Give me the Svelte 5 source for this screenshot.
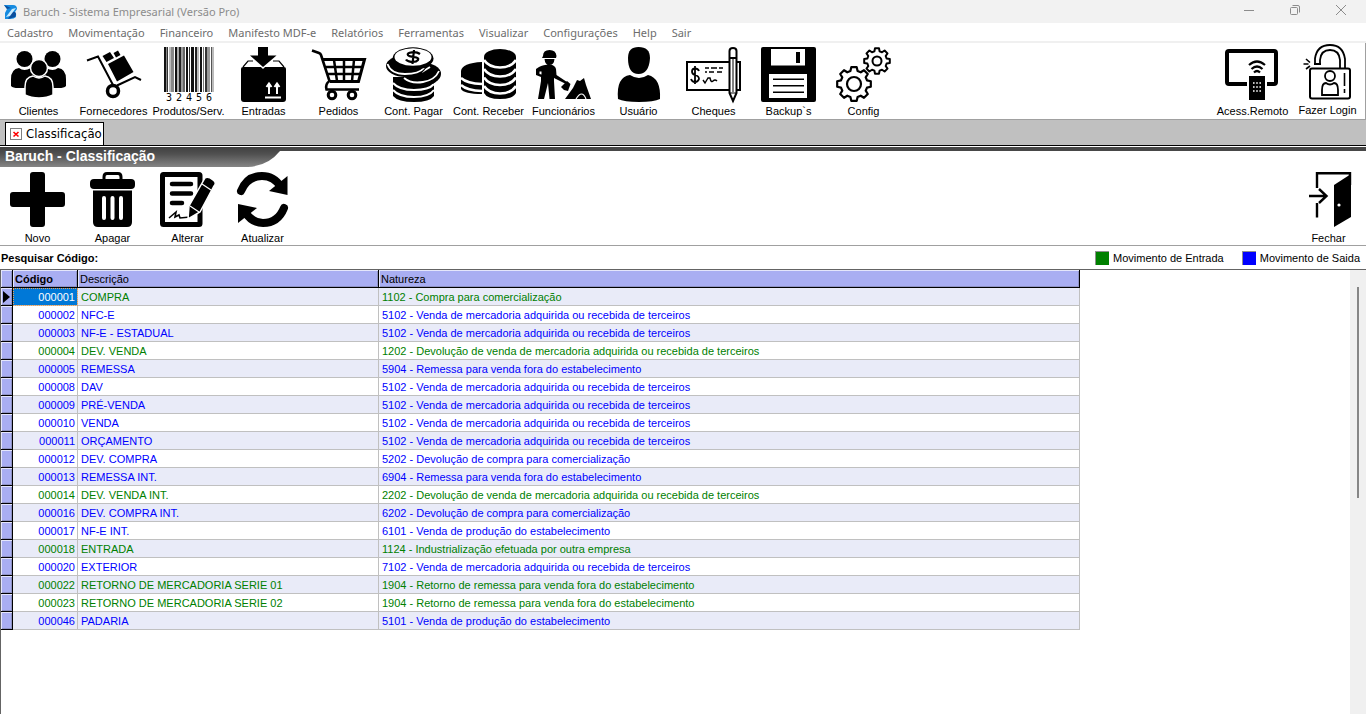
<script>
  const menus = ['Cadastro', 'Movimentação', 'Financeiro', 'Manifesto MDF-e', 'Relatórios', 'Ferramentas', 'Visualizar', 'Configurações', 'Help', 'Sair'];

  const mainTools = [
    ['clientes', 'Clientes'],
    ['fornecedores', 'Fornecedores'],
    ['produtos', 'Produtos/Serv.'],
    ['entradas', 'Entradas'],
    ['pedidos', 'Pedidos'],
    ['pagar', 'Cont. Pagar'],
    ['receber', 'Cont. Receber'],
    ['funcionarios', 'Funcionários'],
    ['usuario', 'Usuário'],
    ['cheques', 'Cheques'],
    ['backup', 'Backup`s'],
    ['config', 'Config']
  ];
  const sideTools = [
    ['remoto', 'Acess.Remoto'],
    ['login', 'Fazer Login']
  ];
  const formTools = [
    ['novo', 'Novo'],
    ['apagar', 'Apagar'],
    ['alterar', 'Alterar'],
    ['atualizar', 'Atualizar']
  ];

  const venda = '5102 - Venda de mercadoria adquirida ou recebida de terceiros';
  // [code, description, nature, incoming movement]
  const rows = [
    ['000001', 'COMPRA', '1102 - Compra para comercialização', true],
    ['000002', 'NFC-E', venda, false],
    ['000003', 'NF-E - ESTADUAL', venda, false],
    ['000004', 'DEV. VENDA', '1202 - Devolução de venda de mercadoria adquirida ou recebida de terceiros', true],
    ['000005', 'REMESSA', '5904 - Remessa para venda fora do estabelecimento', false],
    ['000008', 'DAV', venda, false],
    ['000009', 'PRÉ-VENDA', venda, false],
    ['000010', 'VENDA', venda, false],
    ['000011', 'ORÇAMENTO', venda, false],
    ['000012', 'DEV. COMPRA', '5202 - Devolução de compra para comercialização', false],
    ['000013', 'REMESSA INT.', '6904 - Remessa para venda fora do estabelecimento', false],
    ['000014', 'DEV. VENDA INT.', '2202 - Devolução de venda de mercadoria adquirida ou recebida de terceiros', true],
    ['000016', 'DEV. COMPRA INT.', '6202 - Devolução de compra para comercialização', false],
    ['000017', 'NF-E INT.', '6101 - Venda de produção do estabelecimento', false],
    ['000018', 'ENTRADA', '1124 - Industrialização efetuada por outra empresa', true],
    ['000020', 'EXTERIOR', '7102 - Venda de mercadoria adquirida ou recebida de terceiros', false],
    ['000022', 'RETORNO DE MERCADORIA SERIE 01', '1904 - Retorno de remessa para venda fora do estabelecimento', true],
    ['000023', 'RETORNO DE MERCADORIA SERIE 02', '1904 - Retorno de remessa para venda fora do estabelecimento', true],
    ['000046', 'PADARIA', '5101 - Venda de produção do estabelecimento', false]
  ];
  let selected = $state('000001');
  let busca = $state('');

  // [x, width, shade] of each barcode stripe
  const bars = [
    [3, 2, '#111'], [5, 1, '#888'], [6, 1, '#333'], [8, 2, '#bbb'], [10, 3, '#888'], [14, 2, '#111'], [16, 2, '#aaa'],
    [18, 2, '#222'], [20, 2, '#999'], [22, 2, '#666'], [25, 2, '#111'], [28, 1, '#333'], [30, 3, '#111'],
    [34, 2, '#222'], [36, 2, '#bbb'], [39, 2, '#111'], [42, 1, '#777'], [44, 2, '#333'], [46, 3, '#999'],
    [50, 1, '#555'], [51, 2, '#bbb']
  ];

  function gear(cx, cy, outer, inner, teeth) {
    const points = [];
    const step = (Math.PI * 2) / teeth;
    for (let i = 0; i < teeth; i++) {
      const a = i * step - Math.PI / 2;
      for (const [offset, r] of [[-0.34, inner], [-0.2, outer], [0.2, outer], [0.34, inner]]) {
        const t = a + offset * step;
        points.push(`${(cx + r * Math.cos(t)).toFixed(1)},${(cy + r * Math.sin(t)).toFixed(1)}`);
      }
    }
    return points.join(' ');
  }
</script>

{#snippet icon(name)}
  <svg class="icon" viewBox="0 0 55 55" aria-hidden="true">
    {#if name === 'clientes'}
      <circle cx="13.5" cy="12" r="8" />
      <circle cx="41.5" cy="12" r="8" />
      <path d="M0 39V32Q0 22 8 21Q13 25 20 21Q25 22 26 41H7Q2 41 0 39Z" />
      <path d="M55 39V32Q55 22 47 21Q42 25 35 21Q30 22 29 41H48Q53 41 55 39Z" />
      <path d="M14 48V40Q14 30 22 29Q28 33 34 29Q42 30 42 40V48Q36 51 28 51T14 48Z" stroke="#fff" stroke-width="1.5" />
      <circle cx="28" cy="21" r="8.5" stroke="#fff" stroke-width="1.5" />
    {:else if name === 'fornecedores'}
      <path d="M1 13.500L12 9.500L27 38M31 38.500L49 30L55 33" fill="none" stroke="#000" stroke-width="2" />
      <circle cx="27" cy="44" r="5.500" fill="none" stroke="#000" stroke-width="3.500" />
      <path d="M22 17L38 8.500L47.500 25L31 34.500ZM16.500 9L24 5L28 11L20.500 15ZM27.500 6L32 3.500L34.500 8L30 10.500Z" />
    {:else if name === 'produtos'}
      {#each bars as [x, w, shade]}
        <rect {x} y="0" width={w} height="45" fill={shade} />
      {/each}
      {#each ['3', '2', '4', '5', '6'] as digit, i}
        <text x={8 + i * 10} y="54" text-anchor="middle" class="digit">{digit}</text>
      {/each}
    {:else if name === 'entradas'}
      <path d="M7 20L12 14H17M37 14H43L48 20" fill="none" stroke="#000" stroke-width="1.200" />
      <path d="M5 22Q5 20 7 20H48Q50 20 50 22V52Q50 55 47 55H8Q5 55 5 52Z" />
      <path d="M14 8.500L27 21L40 8.500" fill="none" stroke="#fff" stroke-width="1.500" />
      <path d="M22 0H32V8.500H40.500L27 20L14 8.500H22Z" />
      <path d="M33 47V37M30.500 40L33 36.500L35.500 40M41 47V37M38.500 40L41 36.500L43.500 40M29 50.500H45" fill="none" stroke="#fff" stroke-width="2" />
    {:else if name === 'pedidos'}
      <path d="M1 3.500L8 6Q9.500 6.500 10 8L18.500 34Q14 37 15.500 42.500H48" fill="none" stroke="#000" stroke-width="2.600" />
      <path d="M12 12.500H53.500L47.500 34.500H19" fill="none" stroke="#000" stroke-width="3" />
      <path d="M15 20H51M17 27H49M23 13L26 34M33 13V34M43 13L41 34" fill="none" stroke="#000" stroke-width="2.500" />
      <circle cx="21" cy="48" r="3.800" fill="#fff" stroke="#000" stroke-width="3" />
      <circle cx="41" cy="48" r="3.800" fill="#fff" stroke="#000" stroke-width="3" />
    {:else if name === 'pagar'}
      <path d="M7 30V49Q12 55 28 55T48 49V30Z" />
      <path d="M7 36Q13 43 28 43T48 37M7 43Q13 50 28 50T48 43" fill="none" stroke="#fff" stroke-width="2" />
      <ellipse cx="36" cy="27" rx="19" ry="11.500" />
      <path d="M18 31Q25 37 37 35T53 24" fill="none" stroke="#fff" stroke-width="1.800" />
      <path d="M36 25L44 20" stroke="#fff" stroke-width="1.800" />
      <ellipse cx="20" cy="19" rx="20" ry="11" />
      <path d="M1.500 17Q5 27 19 27T38 21" fill="none" stroke="#fff" stroke-width="1.800" />
      <ellipse cx="27" cy="11.500" rx="20.500" ry="11.200" />
      <ellipse cx="27" cy="10" rx="18.500" ry="8.800" fill="#fff" />
      <path d="M34 7Q31 4.800 26 5.300Q20.500 6 22 8.200Q23 9.600 28 10Q33.500 10.800 32 13Q30 15.500 25 14.800Q21 14.200 20 12.500M28 3L26.500 17" fill="none" stroke="#000" stroke-width="2.200" />
    {:else if name === 'receber'}
      <path d="M21 15Q1 16 0 24V42Q3 47 21 47Z" />
      <path d="M0 31Q6 36.500 21 37M0 38Q6 43.500 21 44" fill="none" stroke="#fff" stroke-width="2.400" />
      <path d="M23 10V46Q26 52 39 52T55 46V10Z" />
      <ellipse cx="39" cy="10" rx="16" ry="8" />
      <path d="M23 13Q28 20.500 39 20.500T55 13M23 22Q28 29.500 39 29.500T55 22M23 30.500Q28 38 39 38T55 30.500M23 39Q28 46.500 39 46.500T55 39" fill="none" stroke="#fff" stroke-width="2.600" />
    {:else if name === 'funcionarios'}
      <path d="M7 9Q7 3 13.500 3Q20 3 20.500 9L20 11H6Z" />
      <path d="M8.500 12H18.500Q18 18 13.500 18T8.500 12ZM3 20Q7 17.500 14 17.500Q19 18 20 22L20.500 28L31 35L30 37L18 31V34L19 52H13.500L12 36L8 52H2L5 34V30L0 28V22Z" />
      <path d="M3.500 24.500V27L5.500 27.500V24.500Z" fill="#fff" />
      <path d="M25 40L31 34L34.500 37L32 44L28 43Z" />
      <path d="M29 52L37 41L41 33L44 34L48 31L50 38L55 52Z" />
      <path d="M40 52Q46 42 50 52" fill="none" stroke="#fff" stroke-width="1.200" />
    {:else if name === 'usuario'}
      <path d="M27.500 0Q39 0 39 11Q38 27 27.500 27T17 11Q17 0 27.500 0Z" />
      <path d="M7 52Q5 30 19 28Q28 34 37 28Q50 31 49 52Q43 55 28 55T7 52Z" />
    {:else if name === 'cheques'}
      <rect x="1" y="15" width="53" height="28" fill="#fff" stroke="#000" stroke-width="2" />
      <path d="M13 24Q12 21.500 9 21.500Q6 21.500 6 24.500Q6 27 9 28Q13 29 13 32Q12 35 9 35Q6 35 5 32M9 19V37" fill="none" stroke="#000" stroke-width="1.800" />
      <path d="M19 21H23M25 21H31M33 21H37M19 25H21M23 25H28M31 25H36" stroke="#000" stroke-width="1.600" />
      <path d="M17 33L19 36L22 31H24Q25 36 27 34T31 34" fill="none" stroke="#000" stroke-width="1.400" />
      <path d="M43.500 4Q43.500 1 47 1T50.500 4V46L47 54L43.500 46Z" fill="#fff" stroke="#000" stroke-width="2" />
      <path d="M43 46H51M47 12V45" stroke="#000" stroke-width="1" />
      <path d="M45.500 51H48.500L47 55ZM43 10H51V12H43Z" />
    {:else if name === 'backup'}
      <rect width="55" height="55" rx="2" />
      <path d="M10 2H44V18.500H10ZM8 27H46V51H8Z" fill="#fff" />
      <path d="M35 5H39V16H35ZM12 31.500H43V33H12ZM12 38H43V39.500H12ZM12 44.500H43V46H12Z" />
    {:else if name === 'config'}
      <polygon points={gear(18, 37, 17, 13.5, 8)} fill="none" stroke="#000" stroke-width="2.200" stroke-linejoin="round" />
      <circle cx="18" cy="37" r="7" fill="none" stroke="#000" stroke-width="2.200" />
      <polygon points={gear(41, 14, 13, 10, 8)} fill="none" stroke="#000" stroke-width="2" stroke-linejoin="round" />
      <circle cx="41" cy="14" r="4.500" fill="none" stroke="#000" stroke-width="2" />
    {:else if name === 'remoto'}
      <rect x="2" y="4" width="49" height="33" rx="2" fill="none" stroke="#000" stroke-width="4" />
      <path d="M22 27H42V55H22Z" fill="#fff" />
      <rect x="24" y="29" width="16" height="24" />
      <path d="M28 36H36M28 40H36M28 44H36" stroke="#fff" stroke-width="1.600" stroke-dasharray="1.600 1.600" />
      <path d="M24 18Q32 11 40 18M26.500 22Q32 17 37.500 22M29 25.500Q32 22.500 35 25.500" fill="none" stroke="#000" stroke-width="2.200" />
    {:else if name === 'login'}
      <rect x="10" y="24.500" width="40" height="30" rx="2" fill="none" stroke="#000" stroke-width="2" />
      <path d="M15 20V14.500Q17 1 30 1T45 15V24M20 20V16Q21 6 30 6T40 16V24M14 20H21" fill="none" stroke="#000" stroke-width="1.800" />
      <circle cx="30" cy="32" r="5" fill="none" stroke="#000" stroke-width="1.800" />
      <path d="M22 51V46Q22 39 26 39Q30 42 34 39Q38 39 38 46V51Z" fill="none" stroke="#000" stroke-width="1.800" />
      <path d="M44.500 29V42M44.500 45V49M6 15L10 18.500M3.500 20H8.500M6 25L10 22" stroke="#000" stroke-width="1.600" />
    {:else if name === 'novo'}
      <path d="M23 0H32Q35 0 35 3V20H52Q55 20 55 23V32Q55 35 52 35H35V52Q35 55 32 55H23Q20 55 20 52V35H3Q0 35 0 32V23Q0 20 3 20H20V3Q20 0 23 0Z" />
    {:else if name === 'apagar'}
      <path d="M19 8V5Q19 1.500 22 1.500H33Q36 1.500 36 5V8" fill="none" stroke="#000" stroke-width="3" />
      <rect x="5" y="7" width="45" height="10" rx="4" />
      <path d="M8 18.500H47V50Q47 55 42 55H13Q8 55 8 50Z" />
      <path d="M19 26V46M27.500 26V46M36 26V46" stroke="#fff" stroke-width="4" stroke-linecap="round" />
    {:else if name === 'alterar'}
      <rect x="2.500" y="2.500" width="37.500" height="50" rx="1" fill="#fff" stroke="#000" stroke-width="5" />
      <path d="M12 12H31M12 21.500H31M12 31H22" stroke="#000" stroke-width="4.500" stroke-linecap="round" />
      <path d="M9 46L16 40L15 45L19 43L20 46L30 45" fill="none" stroke="#000" stroke-width="1.600" />
      <path d="M45 6Q48 4 53 8Q57 11 54 14L40 40L28 47L29 34Z" stroke="#fff" stroke-width="1.500" />
      <path d="M42 12L51 18M30 34L39 40" stroke="#fff" stroke-width="1.200" />
    {:else if name === 'atualizar'}
      <path d="M6 19Q12 4 27 4Q39 4 46 15" fill="none" stroke="#000" stroke-width="8" stroke-linecap="round" />
      <path d="M52.500 4V23L34 19Z" />
      <path d="M49 36Q43 51 28 51Q17 51 10 40" fill="none" stroke="#000" stroke-width="8" stroke-linecap="round" />
      <path d="M3 51V32L22 36Z" />
    {:else if name === 'fechar'}
      <path d="M16 16V1.200H49V13M16 31V45.500" fill="none" stroke="#000" stroke-width="2.400" />
      <path d="M33 13L50 2V45L33 55Z" />
      <path d="M8 24H25M18 17L25.500 24L18 31" fill="none" stroke="#000" stroke-width="2.400" />
      <circle cx="38" cy="33" r="1.600" fill="#fff" />
    {/if}
  </svg>
{/snippet}

{#snippet tool([name, label])}
  <button class="tool" type="button">
    {@render icon(name)}
    <span>{label}</span>
  </button>
{/snippet}

<div class="window">
  <header class="titlebar">
    <svg class="logo" viewBox="0 0 16 16" aria-hidden="true">
      <path d="M1 1H10Q14 1 14 5L12 8Q14 10 13 13Q11 15 7 15H2V9L4 5Z" fill="#168be0" />
      <path d="M1 1L8 4L4 5ZM9 8L12 8Q14 10 12 13L5 15Z" fill="#0b4e9c" />
      <path d="M3 13L9 5L13 4L7 12Z" fill="#c9ecff" />
    </svg>
    <span class="caption">Baruch - Sistema Empresarial (Versão Pro)</span>
    <div class="controls">
      <button type="button" aria-label="Minimizar"><svg viewBox="0 0 12 12"><path d="M1 6.500H11" /></svg></button>
      <button type="button" aria-label="Restaurar"><svg viewBox="0 0 12 12"><rect x="1.500" y="3.500" width="7" height="7" rx="1" /><path d="M3.500 1.500H9Q10.500 1.500 10.500 3V8.500" /></svg></button>
      <button type="button" aria-label="Fechar janela"><svg viewBox="0 0 12 12"><path d="M1 1L11 11M11 1L1 11" /></svg></button>
    </div>
  </header>

  <nav class="menu">
    {#each menus as item}
      <button type="button">{item}</button>
    {/each}
  </nav>

  <div class="toolbar main">
    <div class="group">
      {#each mainTools as item}{@render tool(item)}{/each}
    </div>
    <div class="group side">
      {#each sideTools as item}{@render tool(item)}{/each}
    </div>
  </div>

  <div class="tabs">
    <div class="tab">
      <button type="button" aria-label="Fechar aba">
        <svg viewBox="0 0 10 10"><path d="M2.500 3L7.500 7.500M7.500 3L2.500 7.500" stroke="#f00" stroke-width="1.600" /></svg>
      </button>
      <span>Classificação</span>
    </div>
  </div>

  <div class="banner">
    <svg viewBox="0 0 280 20" aria-hidden="true">
      <defs>
        <linearGradient id="steel" x1="0" y1="0" x2="0" y2="1">
          <stop offset="0" stop-color="#404040" />
          <stop offset="0.350" stop-color="#505050" />
          <stop offset="1" stop-color="#858585" />
        </linearGradient>
      </defs>
      <path d="M0 0H280V4Q268 19 248 20H0Z" fill="url(#steel)" />
    </svg>
    <h1>Baruch - Classificação</h1>
  </div>

  <div class="toolbar form">
    <div class="group">
      {#each formTools as item}{@render tool(item)}{/each}
    </div>
    <div class="group">{@render tool(['fechar', 'Fechar'])}</div>
  </div>

  <div class="search">
    <label for="busca">Pesquisar Código:</label>
    <input id="busca" type="text" bind:value={busca} />
    <span class="legend"><i class="entrada"></i>Movimento de Entrada</span>
    <span class="legend"><i class="saida"></i>Movimento de Saida</span>
  </div>

  <main class="grid">
    <div class="sheet">
      <table>
        <colgroup><col class="c-mark" /><col class="c-code" /><col class="c-desc" /><col class="c-nat" /></colgroup>
        <thead>
          <tr><th></th><th class="sorted">Código</th><th>Descrição</th><th>Natureza</th></tr>
        </thead>
        <tbody>
          {#each rows as [code, desc, nature, incoming]}
            <tr class:incoming class:selected={selected === code} onclick={() => (selected = code)}>
              <th scope="row">{#if selected === code}<svg viewBox="0 0 7 12"><path d="M0 0L7 6L0 12Z" /></svg>{/if}</th>
              <td class="code">{code}</td>
              <td>{desc}</td>
              <td>{nature}</td>
            </tr>
          {/each}
        </tbody>
      </table>
    </div>
    <div class="scroll"><div class="thumb"></div></div>
  </main>
</div>

<style>
  :global(body) { margin: 0; background: #fff; }
  .window {
    display: flex;
    flex-direction: column;
    min-height: 100vh;
    background: #fff;
    color: #000;
    font: 11px/14px "Liberation Sans", Arial, sans-serif;
  }
  button {
    margin: 0;
    padding: 0;
    border: 0;
    background: none;
    color: inherit;
    font: inherit;
  }
  svg { display: block; }

  .titlebar {
    display: flex;
    align-items: center;
    height: 23px;
    padding: 0 2px 0 3px;
    background: #f2f2f2;
    color: #8c8c8c;
    font: 11px/16px "Noto Sans", "Open Sans", sans-serif;
  }
  .logo { width: 16px; height: 16px; }
  .caption { flex: 1; margin-left: 4px; }
  .controls { display: flex; align-self: flex-start; }
  .controls button {
    display: grid;
    place-items: center;
    width: 46px;
    height: 20px;
  }
  .controls svg { width: 12px; height: 12px; fill: none; stroke: #8c8c8c; }

  .menu {
    display: flex;
    gap: 15px;
    height: 18px;
    padding-left: 7px;
    border-bottom: 2px solid #f0f0f0;
    color: #6d6d6d;
    font: 11px/20px "Noto Sans", "Open Sans", sans-serif;
  }

  .toolbar {
    display: flex;
    justify-content: space-between;
    border-bottom: 1px solid #a0a0a0;
  }
  .main { height: 76px; padding-left: 1px; border-right: 1px solid #a0a0a0; }
  .form { height: 78px; }
  .group { display: flex; }
  .tool {
    display: flex;
    flex-direction: column;
    align-items: center;
    gap: 2px;
    width: 75px;
    padding-top: 4px;
    line-height: 14px;
    white-space: nowrap;
  }
  .form .tool { gap: 4px; padding-top: 5px; }
  .icon { flex: none; width: 55px; height: 55px; overflow: visible; }
  .digit { font: 10px "DejaVu Sans Mono", monospace; }
  .side .tool:last-child { gap: 4px; padding-top: 1px; }

  .tabs {
    display: flex;
    align-items: flex-end;
    height: 25px;
    padding-left: 5px;
    border-bottom: 1px solid #000;
    background: #c0c0c0;
  }
  .tab {
    display: flex;
    align-items: center;
    gap: 4px;
    height: 22px;
    padding: 0 1px 0 4px;
    border: 1px solid #000;
    border-bottom: 0;
    background: #fff;
    font: 13px/22px "DejaVu Sans Condensed", "Noto Sans", sans-serif;
  }
  .tab button { width: 12px; height: 12px; box-sizing: border-box; border: 1px solid #808080; }

  .banner {
    display: grid;
    height: 20px;
    margin-top: 1px;
    background: linear-gradient(#474747 4px, #fff 4px);
  }
  .banner > * { grid-area: 1 / 1; }
  .banner svg { width: 280px; height: 20px; }
  h1 {
    margin: 0;
    padding-left: 5px;
    color: #fff;
    font: bold 14px/19px "Liberation Sans", Arial, sans-serif;
  }

  .search {
    display: flex;
    align-items: center;
    height: 23px;
    padding-right: 6px;
    border-bottom: 1px solid #646464;
  }
  .search label { padding-left: 1px; font-weight: bold; }
  .search input {
    flex: 1;
    min-width: 0;
    margin-left: 4px;
    padding: 0;
    border: 0;
    outline: 0;
    background: none;
    font: inherit;
  }
  .legend { display: flex; align-items: center; gap: 4px; margin-left: 18px; }
  .legend i {
    box-sizing: border-box;
    width: 14px;
    height: 14px;
    border: 1px solid #909090;
    border-right: 0;
    border-bottom: 0;
  }
  i.entrada { background: #008000; }
  i.saida { background: #00f; }

  .grid { display: flex; flex: 1; border-left: 1px solid #646464; }
  .sheet { flex: 1; min-width: 0; }
  table {
    width: 1079px;
    border-collapse: separate;
    border-spacing: 0;
    table-layout: fixed;
  }
  .c-mark { width: 12px; }
  .c-code { width: 65px; }
  .c-desc { width: 301px; }
  th, td {
    box-sizing: border-box;
    height: 18px;
    padding: 0 0 0 3px;
    border: 0 solid #c0c0c0;
    border-width: 0 1px 1px 0;
    line-height: 16px;
    text-align: left;
    white-space: nowrap;
  }
  th {
    padding-left: 2px;
    border-color: #000;
    background: #a9aef2;
    box-shadow: inset 1px 1px #e4e6fb, inset -1px -1px #8f93c4;
    font-weight: normal;
  }
  th.sorted { font-weight: bold; }
  th svg { width: 7px; height: 12px; margin-left: 1px; }
  tbody th { padding: 0 0 0 1px; }
  tbody tr { background: #fff; color: #00f; }
  tbody tr:nth-child(odd) { background: #e9ebf8; }
  tbody tr.incoming { color: #008000; }
  td.code { padding: 0 2px 0 0; text-align: right; }
  tbody .selected td.code {
    outline: 1px dotted #f0a050;
    outline-offset: -1px;
    background: #0078d7;
    color: #fff;
  }

  .scroll {
    display: flex;
    flex: none;
    justify-content: center;
    width: 16px;
    padding-top: 17px;
    box-sizing: border-box;
    background: #f0f0f0;
  }
  .thumb { width: 2px; height: 211px; background: #868686; }
</style>
